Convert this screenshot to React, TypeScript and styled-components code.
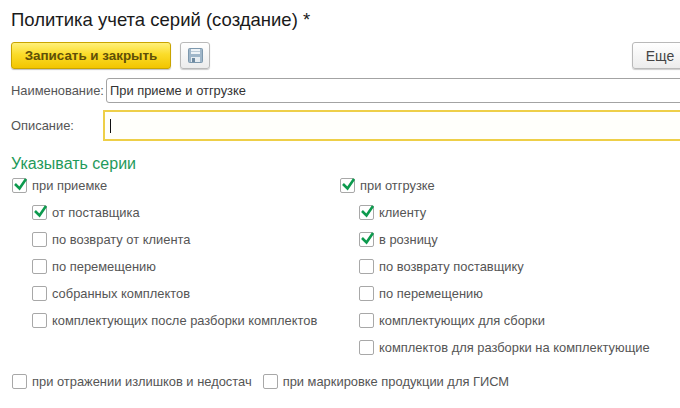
import React from 'react';
import styled, { createGlobalStyle } from 'styled-components';

const GlobalStyle = createGlobalStyle`
  html, body {
    margin: 0;
    width: 680px;
    height: 408px;
    overflow: hidden;
    background: #fff;
    font-family: "Liberation Sans", Arial, sans-serif;
  }
`;

const Page = styled.div`
  width: 680px;
  height: 408px;
  overflow: hidden;
  box-sizing: border-box;
  padding: 9px 0 0 11px;
  display: flex;
  flex-direction: column;
`;

const Title = styled.h1`
  margin: 0;
  height: 33px;
  font-size: 18.5px;
  line-height: 22px;
  font-weight: 400;
  color: #1a1a1a;
`;

const Toolbar = styled.div`
  display: flex;
  align-items: stretch;
  height: 27px;
  gap: 9px;
`;

const PrimaryButton = styled.button`
  width: 160px;
  padding: 0;
  border: 1px solid #c9a400;
  border-radius: 3px;
  background: linear-gradient(#fff07a, #fbdc2a 45%, #f2c500);
  box-shadow: 0 1px 1px rgba(0, 0, 0, 0.25);
  color: #5f4f08;
  font: 700 13.4px "Liberation Sans", Arial, sans-serif;
`;

const PlainButton = styled.button`
  padding: 0;
  display: flex;
  align-items: center;
  justify-content: center;
  border: 1px solid #b9b9b9;
  border-radius: 3px;
  background: linear-gradient(#fff, #ececec);
  box-shadow: 0 1px 1px rgba(0, 0, 0, 0.2);
  color: #444;
  font: 400 14px "Liberation Sans", Arial, sans-serif;
`;

const SaveButton = styled(PlainButton)`
  width: 30px;
`;

const MoreButton = styled(PlainButton)`
  width: 56px;
  margin-left: auto;
  margin-right: -8px;
  flex: none;
`;

const FieldRow = styled.div<{ $top: number; $height: number; $labelWidth: number }>`
  display: flex;
  align-items: center;
  margin-top: ${(p) => p.$top}px;
  height: ${(p) => p.$height}px;

  & > label {
    flex: none;
    width: ${(p) => p.$labelWidth}px;
    font-size: 12.9px;
    color: #555;
    white-space: nowrap;
  }
`;

const NameInput = styled.div`
  flex: 1;
  margin-right: -10px;
  height: 100%;
  box-sizing: border-box;
  display: flex;
  align-items: center;
  padding-left: 3px;
  border: 1px solid #a3a3a3;
  border-radius: 3px 0 0 3px;
  font-size: 12.9px;
  color: #333;
`;

const DescriptionInput = styled.div`
  flex: 1;
  margin-right: -10px;
  height: 100%;
  box-sizing: border-box;
  display: flex;
  align-items: center;
  padding-left: 5px;
  border: 2px solid #eecf48;
  background: #fffffb;
`;

const Caret = styled.span`
  width: 1px;
  height: 14px;
  background: #111;
`;

const SectionTitle = styled.h2`
  margin: 14px 0 0;
  height: 18px;
  font-size: 16px;
  line-height: 18px;
  font-weight: 400;
  color: #1f9a5b;
`;

const Columns = styled.div`
  display: flex;
  margin-top: -1px;
`;

const Column = styled.div<{ $width: number }>`
  width: ${(p) => p.$width}px;
  flex: none;
  display: flex;
  flex-direction: column;
`;

const Option = styled.div<{ $indent?: number }>`
  display: flex;
  align-items: center;
  height: 27px;
  margin-left: ${(p) => p.$indent ?? 0}px;
  gap: 5px;
  font-size: 12.9px;
  color: #555;
  white-space: nowrap;
`;

const Box = styled.span`
  position: relative;
  flex: none;
  width: 15px;
  height: 15px;
  box-sizing: border-box;
  border: 1px solid #a8a8a8;
  border-radius: 2px;
  background: #fff;
`;

const Tick = styled.svg`
  position: absolute;
  left: 1px;
  top: -3px;
  width: 14px;
  height: 15px;
`;

const BottomRow = styled.div`
  display: flex;
  margin-top: 7px;
  gap: 11px;
`;

const Check = ({ label, checked, indent }: { label: string; checked?: boolean; indent?: number }) => (
  <Option $indent={indent}>
    <Box>
      {checked && (
        <Tick viewBox="0 0 14 15">
          <path d="M1 8l4.5 4.5L12 3" fill="none" stroke="#0d9a4e" strokeWidth="2.6" />
        </Tick>
      )}
    </Box>
    {label}
  </Option>
);

const leftOptions = [
  { label: 'от поставщика', checked: true },
  { label: 'по возврату от клиента' },
  { label: 'по перемещению' },
  { label: 'собранных комплектов' },
  { label: 'комплектующих после разборки комплектов' },
];

const rightOptions = [
  { label: 'клиенту', checked: true },
  { label: 'в розницу', checked: true },
  { label: 'по возврату поставщику' },
  { label: 'по перемещению' },
  { label: 'комплектующих для сборки' },
  { label: 'комплектов для разборки на комплектующие' },
];

const App = () => (
  <Page>
    <GlobalStyle />
    <Title>Политика учета серий (создание) *</Title>
    <Toolbar>
      <PrimaryButton>Записать и закрыть</PrimaryButton>
      <SaveButton>
        <svg width="15" height="15" viewBox="0 0 15 15">
          <rect x="0.5" y="0.5" width="14" height="14" rx="1" fill="#9fb6c9" stroke="#7d98ad" />
          <rect x="3" y="1" width="9" height="5" fill="#eef3f7" />
          <rect x="3" y="3" width="9" height="1" fill="#bccbd7" />
          <rect x="3" y="9" width="9" height="5" fill="#e6ecf1" />
          <rect x="4" y="10" width="3" height="4" fill="#6f8aa0" />
        </svg>
      </SaveButton>
      <MoreButton>Еще</MoreButton>
    </Toolbar>
    <FieldRow $top={9} $height={25} $labelWidth={95}>
      <label>Наименование:</label>
      <NameInput>При приеме и отгрузке</NameInput>
    </FieldRow>
    <FieldRow $top={7} $height={31} $labelWidth={92}>
      <label>Описание:</label>
      <DescriptionInput>
        <Caret />
      </DescriptionInput>
    </FieldRow>
    <SectionTitle>Указывать серии</SectionTitle>
    <Columns>
      <Column $width={328}>
        <Check label="при приемке" checked indent={1} />
        {leftOptions.map((o) => (
          <Check key={o.label} label={o.label} checked={o.checked} indent={21} />
        ))}
      </Column>
      <Column $width={330}>
        <Check label="при отгрузке" checked indent={1} />
        {rightOptions.map((o) => (
          <Check key={o.label} label={o.label} checked={o.checked} indent={20} />
        ))}
      </Column>
    </Columns>
    <BottomRow>
      <Check label="при отражении излишков и недостач" indent={1} />
      <Check label="при маркировке продукции для ГИСМ" />
    </BottomRow>
  </Page>
);

export default App;
